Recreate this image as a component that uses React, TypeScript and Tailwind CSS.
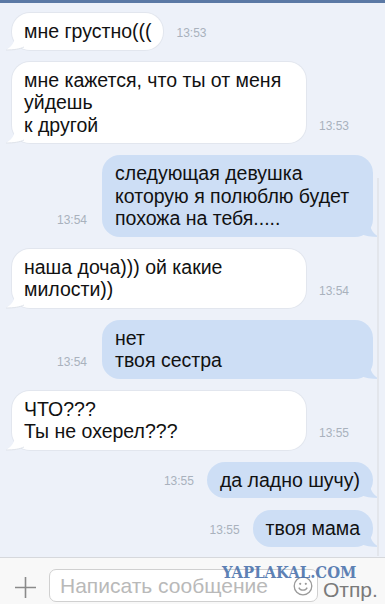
import React from "react";

const font = { fontFamily: '"Liberation Sans", Arial, sans-serif' };

function TailLeft() {
  return (
    <svg className="absolute left-[-6px] bottom-[-1px]" width="18" height="18" viewBox="0 0 18 18">
      <path d="M10 0 L18 0 L18 14 C14 16 8 17 0 17 C5 14 9 10 10 0 Z" fill="#ffffff" />
      <path d="M18 14 C14 16 8 17 0 17" fill="none" stroke="#dfe3ea" strokeWidth="1" />
    </svg>
  );
}

function TailRight() {
  return (
    <svg className="absolute right-[-6px] bottom-[-1px]" width="18" height="18" viewBox="0 0 18 18">
      <path d="M8 0 L0 0 L0 14 C4 16 10 17 18 17 C13 14 9 10 8 0 Z" fill="#cddef5" />
    </svg>
  );
}

function Time({ t, cls }: { t: string; cls: string }) {
  return <div className={`text-[12px] leading-[14px] text-[#a9b1bd] ${cls}`}>{t}</div>;
}

function In({ lines, time, w }: { lines: string[]; time: string; w?: string }) {
  return (
    <div className="flex items-end pl-[12px]">
      <div className={`relative bg-white rounded-[18px] px-[12px] py-[7px] shadow-[0_0_0_1px_#e2e6ee] ${w ?? ""}`}>
        <TailLeft />
        <div className="relative text-[19.5px] leading-[22.5px] text-[#111]">
          {lines.map((l, i) => (
            <div key={i}>{l}</div>
          ))}
        </div>
      </div>
      <Time t={time} cls="ml-[13px] mb-[10px]" />
    </div>
  );
}

function Out({ lines, time, w, gap }: { lines: string[]; time: string; w?: string; gap: string }) {
  return (
    <div className="flex items-end justify-end pr-[12px]">
      <Time t={time} cls={`${gap} mb-[10px]`} />
      <div className={`relative bg-[#cddef5] rounded-[18px] px-[13px] py-[7px] ${w ?? ""}`}>
        <TailRight />
        <div className="relative text-[19.5px] leading-[22.5px] text-[#111]">
          {lines.map((l, i) => (
            <div key={i}>{l}</div>
          ))}
        </div>
      </div>
    </div>
  );
}

export default function App() {
  return (
    <div className="relative w-[385px] h-[604px] overflow-hidden bg-[#edf1f9] flex flex-col" style={font}>
      <div className="h-[3px] bg-[#5b79a5] shrink-0" />
      <div className="flex-1 flex flex-col gap-[12px] pt-[10px]">
        <In lines={["мне грустно((("]} time="13:53" />
        <In lines={["мне кажется, что ты от меня", "уйдешь", "к другой"]} time="13:53" w="w-[294px]" />
        <Out
          lines={["следующая девушка", "которую я полюблю будет", "похожа на тебя....."]}
          time="13:54"
          w="w-[271px]"
          gap="mr-[15px]"
        />
        <In lines={["наша доча))) ой какие", "милости))"]} time="13:54" w="w-[294px]" />
        <Out lines={["нет", "твоя сестра"]} time="13:54" w="w-[271px]" gap="mr-[15px]" />
        <In lines={["ЧТО???", "Ты не охерел???"]} time="13:55" w="w-[294px]" />
        <Out lines={["да ладно шучу)"]} time="13:55" gap="mr-[13px]" />
        <Out lines={["твоя мама"]} time="13:55" gap="mr-[13px]" />
      </div>
      <div className="absolute right-[6px] top-[178px] w-[2px] h-[378px] bg-[#e3e6ec]" />
      <div className="shrink-0 h-[47px] bg-[#f8f8f8] border-t border-[#d6d8dc] flex items-start pt-[11px] relative">
        <svg className="ml-[15px] mt-[8px] shrink-0" width="21" height="21" viewBox="0 0 21 21">
          <path d="M10.5 0 V21 M0 10.5 H21" stroke="#8a8a8a" strokeWidth="1.6" />
        </svg>
        <div className="ml-[13px] shrink-0 w-[269px] h-[33px] bg-white border border-[#d0d0d0] rounded-[7px] flex items-center pl-[10px] pr-[4px]">
          <span className="text-[21px] text-[#b9b9b9] flex-1 whitespace-nowrap">Написать сообщение</span>
          <svg className="shrink-0" width="20" height="20" viewBox="0 0 20 20">
            <circle cx="10" cy="10" r="8.8" fill="none" stroke="#9a9a9a" strokeWidth="1.3" />
            <circle cx="7.2" cy="7.8" r="1.1" fill="#9a9a9a" />
            <circle cx="12.8" cy="7.8" r="1.1" fill="#9a9a9a" />
            <path d="M5.8 11.6 C7.5 15 12.5 15 14.2 11.6" fill="none" stroke="#9a9a9a" strokeWidth="1.3" />
          </svg>
        </div>
        <span className="ml-[5px] mt-[5px] text-[21px] text-[#7a7a7a] whitespace-nowrap">Отпр.</span>
        <div
          className="absolute left-[222px] top-[6px] text-[17px] leading-[17px] font-bold text-[#4d74ad] opacity-90 origin-left scale-x-[0.87]"
          style={{ fontFamily: '"DejaVu Serif", serif' }}
        >
          YAPLAKAL.COM
        </div>
      </div>
    </div>
  );
}
